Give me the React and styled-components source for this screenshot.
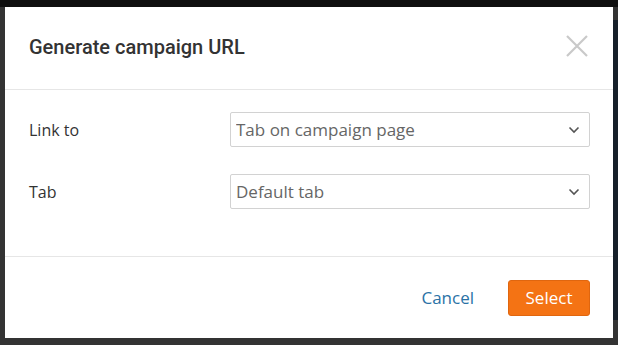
import React, { useState } from "react";
import styled, { createGlobalStyle } from "styled-components";

const GlobalStyle = createGlobalStyle`
  html, body {
    margin: 0;
    padding: 0;
  }
  body {
    width: 618px;
    height: 345px;
    overflow: hidden;
    background: linear-gradient(#0f0f0f 0 7px, #333333 7px);
    font-family: "Open Sans", "Liberation Sans", sans-serif;
  }
`;

const App = () => {
  const [linkTo, setLinkTo] = useState("campaign-tab");
  const [tab, setTab] = useState("default");

  return (
    <Backdrop>
      <GlobalStyle />
      <Modal>
        <Header>
          <Title>Generate campaign URL</Title>
          <CloseButton aria-label="Close">
            <svg width="22" height="22" viewBox="0 0 22 22">
              <path d="M1 1 L21 21 M21 1 L1 21" stroke="#c9c9c9" strokeWidth="2.2" />
            </svg>
          </CloseButton>
        </Header>

        <Body>
          <Row>
            <Label>Link to</Label>
            <SelectWrap>
              <Select value={linkTo} onChange={(e) => setLinkTo(e.target.value)}>
                <option value="campaign-tab">Tab on campaign page</option>
              </Select>
              <Chevron />
            </SelectWrap>
          </Row>
          <Row>
            <Label>Tab</Label>
            <SelectWrap>
              <Select value={tab} onChange={(e) => setTab(e.target.value)}>
                <option value="default">Default tab</option>
              </Select>
              <Chevron />
            </SelectWrap>
          </Row>
        </Body>

        <Footer>
          <LinkButton>Cancel</LinkButton>
          <PrimaryButton>Select</PrimaryButton>
        </Footer>
      </Modal>
      <SideStrip />
    </Backdrop>
  );
};
export default App;

const Chevron = () => (
  <ChevronIcon width="12" height="8" viewBox="0 0 12 8">
    <path d="M1.5 1.5 L6 6 L10.5 1.5" fill="none" stroke="#555" strokeWidth="1.6" />
  </ChevronIcon>
);

const Backdrop = styled.div`
  display: flex;
  height: 345px;
`;

const SideStrip = styled.div`
  width: 5px;
  margin-top: 20px;
  height: 300px;
  background: #16202a;
`;

const Modal = styled.div`
  width: 608px;
  height: 331px;
  margin: 7px 0 0 5px;
  background: #fff;
  display: flex;
  flex-direction: column;
`;

const Header = styled.div`
  height: 83px;
  box-sizing: border-box;
  padding: 0 25px 0 24px;
  display: flex;
  align-items: center;
  justify-content: space-between;
  border-bottom: 1px solid #e6e6e6;
`;

const Title = styled.h2`
  margin: 0;
  font-family: Roboto, "Liberation Sans", sans-serif;
  font-weight: 500;
  font-size: 20px;
  color: #333;
  padding-bottom: 3px;
`;

const CloseButton = styled.button`
  border: none;
  background: none;
  padding: 0;
  display: flex;
  cursor: pointer;
  margin-bottom: 5px;
`;

const Body = styled.div`
  height: 167px;
  box-sizing: border-box;
  padding: 22px 23px 0 24px;
  display: flex;
  flex-direction: column;
  gap: 27px;
  border-bottom: 1px solid #e6e6e6;
`;

const Row = styled.div`
  display: grid;
  grid-template-columns: 201px 1fr;
  align-items: center;
`;

const Label = styled.label`
  font-size: 16px;
  color: #333;
`;

const SelectWrap = styled.div`
  position: relative;
`;

const Select = styled.select`
  appearance: none;
  width: 100%;
  height: 35px;
  box-sizing: border-box;
  border: 1px solid #d2d2d2;
  border-radius: 2px;
  background: #fff;
  padding: 0 30px 0 5px;
  font-family: "Open Sans", "Liberation Sans", sans-serif;
  font-size: 17px;
  color: #666;
  outline: none;
`;

const ChevronIcon = styled.svg`
  position: absolute;
  right: 10px;
  top: 14px;
  pointer-events: none;
`;

const Footer = styled.div`
  flex: 1;
  display: flex;
  align-items: center;
  justify-content: flex-end;
  gap: 34px;
  padding: 0 23px 0 24px;
`;

const LinkButton = styled.button`
  border: none;
  background: none;
  padding: 0;
  font-family: "Open Sans", "Liberation Sans", sans-serif;
  font-size: 17px;
  color: #2a72a6;
  cursor: pointer;
`;

const PrimaryButton = styled.button`
  width: 82px;
  height: 36px;
  border: 1px solid #e0660f;
  border-radius: 3px;
  background: #f47314;
  color: #fff;
  font-family: "Open Sans", "Liberation Sans", sans-serif;
  font-size: 17px;
  cursor: pointer;
`;
